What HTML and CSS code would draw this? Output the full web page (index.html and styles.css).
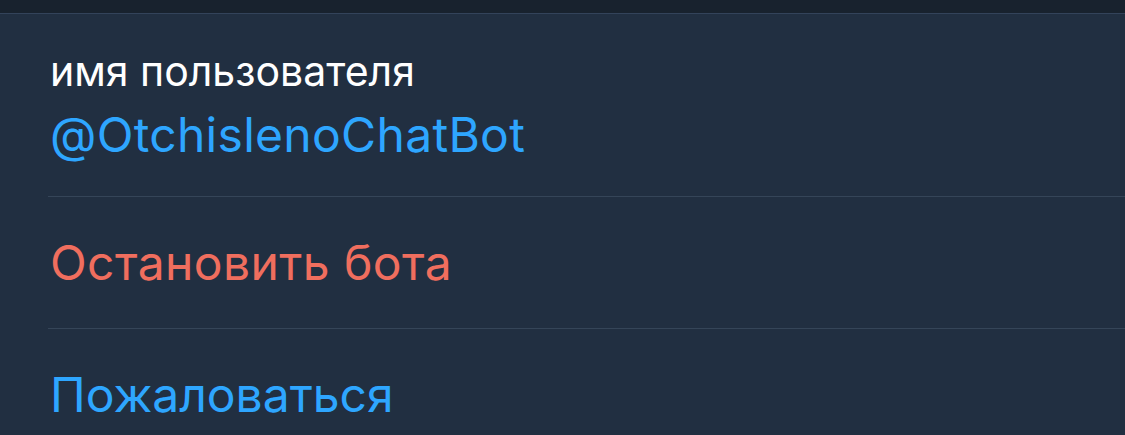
FILE: index.html
```html
<!DOCTYPE html>
<html lang="ru">
<head>
<meta charset="utf-8">
<link rel="stylesheet" href="styles.css">
</head>
<body>
<div class="topbar"></div>
<div class="list">
  <div class="row info">
    <div class="label">имя пользователя</div>
    <div class="username">@OtchislenoChatBot</div>
  </div>
  <div class="row action danger">Остановить бота</div>
  <div class="row action link last">Пожаловаться</div>
</div>
</body>
</html>
```
FILE: styles.css
```css
html, body {
  margin: 0;
  padding: 0;
  background: #212f41;
  height: 100%;
  overflow: hidden;
}
body {
  font-family: Inter, Roboto, "Noto Sans", sans-serif;
}
.topbar {
  height: 13px;
  background: #18222e;
  border-bottom: 1px solid #33435a;
}
.list {
  padding-left: 48px;
}
.row {
  border-bottom: 1px solid #354558;
}
.row.last {
  border-bottom: none;
}
.info {
  padding: 33px 0 33px 2px;
  display: flex;
  flex-direction: column;
  gap: 12px;
}
.label {
  color: #ffffff;
  font-size: 41px;
  line-height: 48px;
}
.username {
  color: #2ea6ff;
  font-size: 48px;
  line-height: 56px;
  letter-spacing: 0.3px;
}
.action {
  font-size: 48px;
  line-height: 56px;
  padding: 38px 0 37px 2px;
}
.danger {
  color: #f06e5e;
  letter-spacing: 0.4px;
}
.link {
  color: #2ea6ff;
}
```
